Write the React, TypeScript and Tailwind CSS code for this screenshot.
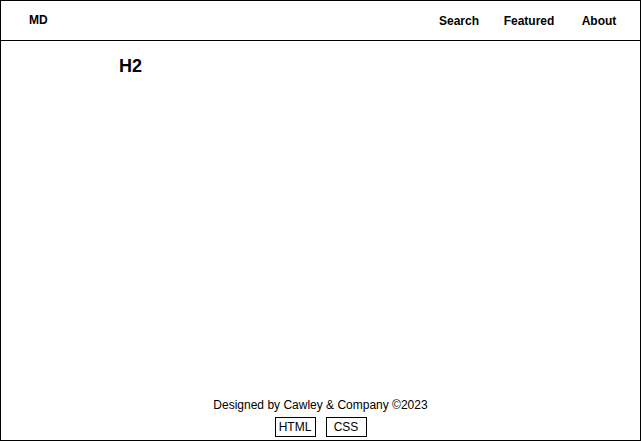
export default function App() {
  const links = ["Search", "Featured", "About"];

  return (
    <div
      className="flex h-[441px] w-[641px] flex-col border border-black bg-white text-black"
      style={{ fontFamily: '"Liberation Sans", Arial, sans-serif' }}
    >
      {/* header */}
      <header className="flex h-[40px] items-center justify-between border-b border-black pl-[28px] pr-[6px]">
        <div className="-mt-[1px] text-[12px] font-bold leading-[14px]">MD</div>
        <nav className="flex">
          {links.map((l) => (
            <a
              key={l}
              href="#"
              className="w-[70px] text-center text-[12px] font-bold leading-[14px]"
            >
              {l}
            </a>
          ))}
        </nav>
      </header>

      {/* main */}
      <main className="flex-1 pl-[118px] pt-[15px]">
        <h2 className="text-[18px] font-bold leading-[21px]">H2</h2>
      </main>

      {/* footer */}
      <footer className="flex flex-col items-center pb-[3px]">
        <p className="text-[12px] leading-[14px]">Designed by Cawley &amp; Company ©2023</p>
        <div className="mt-[5px] flex gap-[10px]">
          <span className="h-[20px] w-[41px] border border-black text-center text-[12px] leading-[18px]">
            HTML
          </span>
          <span className="h-[20px] w-[41px] border border-black text-center text-[12px] leading-[18px]">
            CSS
          </span>
        </div>
      </footer>
    </div>
  );
}
